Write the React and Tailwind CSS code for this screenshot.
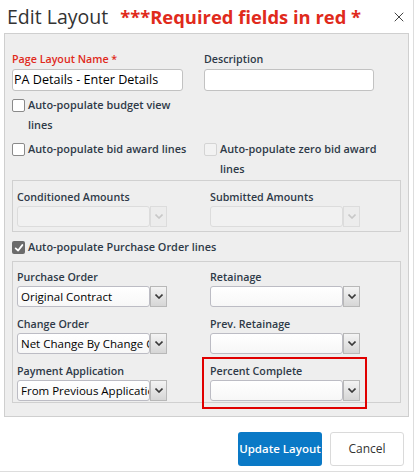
import { X } from 'lucide-react';

const font = { fontFamily: '"Open Sans", "Noto Sans", sans-serif' };

function Checkbox({ checked, disabled }) {
  if (checked) {
    return (
      <span className="mt-[4px] flex h-[13px] w-[13px] shrink-0 items-center justify-center rounded-[2px] bg-[#6b6b6b]">
        <svg viewBox="0 0 12 12" className="h-[10px] w-[10px]">
          <path d="M2 6.5 L5 9 L10 2.5" fill="none" stroke="white" strokeWidth="2.2" strokeLinecap="round" strokeLinejoin="round" />
        </svg>
      </span>
    );
  }
  return (
    <span
      className={`mt-[4px] h-[13px] w-[13px] shrink-0 rounded-[2px] border ${
        disabled ? 'border-[#d4d4d4] bg-[#f2f2f2]' : 'border-[#8a8a8a] bg-white'
      }`}
    />
  );
}

function CheckRow({ children, checked, disabled }) {
  return (
    <div className="flex items-start gap-[3px] text-[10.9px] font-semibold leading-[20px] text-[#2f3a48]">
      <Checkbox checked={checked} disabled={disabled} />
      <span>{children}</span>
    </div>
  );
}

function Select({ value, disabled }) {
  return (
    <div className="flex h-[21px] items-stretch">
      <div
        className={`flex w-[133px] items-center overflow-hidden whitespace-nowrap rounded-[3px] border px-[3px] text-[11.5px] text-black ${
          disabled
            ? 'border-[#dcdcdc] bg-[#f1f1f1]'
            : 'border-[#bcbcc4] bg-gradient-to-b from-white to-[#f7f7f7]'
        }`}
      >
        {value}
      </div>
      <div
        className={`flex w-[17px] items-center justify-center border ${
          disabled
            ? 'border-[#dcdcdc] bg-[#ececec]'
            : 'border-[#b8b8b8] bg-gradient-to-b from-[#f4f4f4] to-[#d6d6d6]'
        }`}
      >
        <svg viewBox="0 0 8 5" className="h-[5px] w-[8px]">
          <path d="M0.5 0.5 L4 4 L7.5 0.5" fill="none" stroke={disabled ? '#c8c8c8' : '#3a3a3a'} strokeWidth="1.6" />
        </svg>
      </div>
    </div>
  );
}

function Field({ label, value, disabled }) {
  return (
    <div>
      <div className="mb-[2px] pt-[1px] text-[10.7px] font-semibold leading-[14px] text-[#2f3a48]">{label}</div>
      <Select value={value} disabled={disabled} />
    </div>
  );
}

export default function App() {
  return (
    <div className="h-[472px] w-[414px] border-b border-r border-[#dddddd] bg-white" style={font}>
      <div className="flex h-[33px] items-center justify-between pl-[7px] pr-[6px]">
        <div className="flex items-baseline gap-[12px]">
          <span className="text-[19.5px] leading-none text-[#333]">Edit Layout</span>
          <span className="text-[18.4px] font-bold leading-none text-[#e02a1c]">***Required fields in red *</span>
        </div>
        <X className="h-[16px] w-[16px] text-[#444]" strokeWidth={1.5} />
      </div>

      <div className="mx-[4px] h-[384px] border border-[#cfcfcf] bg-[#eeeeee] px-[7px] pt-[18px]">
        <div className="grid grid-cols-[192px_1fr]">
          <div>
            <div className="mb-[2px] text-[10.7px] font-semibold leading-[15px] text-[#e02a1c]">Page Layout Name *</div>
            <div className="flex h-[22px] w-[171px] items-center rounded-[3px] border border-[#c2c2c2] bg-white px-[1px] text-[12.6px] text-black">
              PA Details - Enter Details
            </div>
          </div>
          <div>
            <div className="mb-[2px] text-[10.7px] font-semibold leading-[15px] text-[#2f3a48]">Description</div>
            <div className="h-[22px] w-[170px] rounded-[3px] border border-[#c2c2c2] bg-white" />
          </div>

          <div className="col-span-2 mt-[4px]">
            <CheckRow>
              Auto-populate budget view
              <br />
              lines
            </CheckRow>
          </div>

          <div className="mt-[4px]">
            <CheckRow>Auto-populate bid award lines</CheckRow>
          </div>
          <div className="mt-[4px]">
            <CheckRow disabled>
              Auto-populate zero bid award
              <br />
              lines
            </CheckRow>
          </div>
        </div>

        <div className="mt-[1px] grid grid-cols-[193px_1fr] border border-[#d0d0d0] px-[4px] pb-[4px] pt-[8px]">
          <Field label="Conditioned Amounts" disabled />
          <Field label="Submitted Amounts" disabled />
        </div>

        <div className="mt-[5px]">
          <CheckRow checked>Auto-populate Purchase Order lines</CheckRow>
        </div>

        <div className="relative mt-[4px] grid grid-cols-[193px_1fr] gap-y-[9px] border border-[#d0d0d0] px-[4px] pb-[1px] pt-[7px]">
          <Field label="Purchase Order" value="Original Contract" />
          <Field label="Retainage" />
          <Field label="Change Order" value="Net Change By Change Order" />
          <Field label="Prev. Retainage" />
          <Field label="Payment Application" value="From Previous Application" />
          <Field label="Percent Complete" />
          <div className="absolute left-[189px] top-[95px] h-[52px] w-[165px] border-2 border-[#e00000]" />
        </div>
      </div>

      <div className="flex justify-end gap-[8px] pr-[9px] pt-[15px]">
        <button className="h-[34px] w-[84px] whitespace-nowrap rounded-[3px] bg-[#0a79c6] text-[11.5px] font-semibold text-white">
          Update Layout
        </button>
        <button className="h-[34px] w-[74px] rounded-[3px] border border-[#dadada] bg-white text-[12px] text-[#333]">
          Cancel
        </button>
      </div>
    </div>
  );
}
